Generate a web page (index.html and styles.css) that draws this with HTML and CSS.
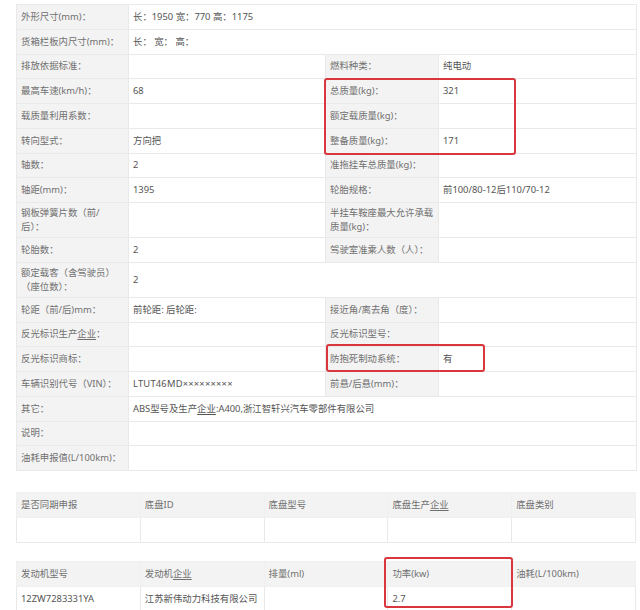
FILE: index.html
```html
<!DOCTYPE html>
<html lang="zh-CN">
<head>
<meta charset="utf-8">
<title>车辆参数</title>
<link rel="stylesheet" href="styles.css">
</head>
<body>
<div class="page">
  <table class="spec">
    <colgroup><col class="c1"><col class="c2"><col class="c3"><col class="c4"></colgroup>
    <tr><td class="lb">外形尺寸(mm)：</td><td colspan="3">长：1950 宽：770 高：1175</td></tr>
    <tr><td class="lb">货箱栏板内尺寸(mm)：</td><td colspan="3">长： 宽： 高：</td></tr>
    <tr><td class="lb">排放依据标准：</td><td></td><td class="lb">燃料种类：</td><td>纯电动</td></tr>
    <tr><td class="lb">最高车速(km/h)：</td><td>68</td><td class="lb">总质量(kg)：</td><td>321</td></tr>
    <tr><td class="lb">载质量利用系数：</td><td></td><td class="lb">额定载质量(kg)：</td><td></td></tr>
    <tr><td class="lb">转向型式：</td><td>方向把</td><td class="lb">整备质量(kg)：</td><td>171</td></tr>
    <tr><td class="lb">轴数：</td><td>2</td><td class="lb">准拖挂车总质量(kg)：</td><td></td></tr>
    <tr><td class="lb">轴距(mm)：</td><td>1395</td><td class="lb">轮胎规格：</td><td>前100/80-12后110/70-12</td></tr>
    <tr class="tall"><td class="lb">钢板弹簧片数（前/<br>后）：</td><td></td><td class="lb">半挂车鞍座最大允许承载<br>质量(kg)：</td><td></td></tr>
    <tr><td class="lb">轮胎数：</td><td>2</td><td class="lb">驾驶室准乘人数（人）：</td><td></td></tr>
    <tr class="tall"><td class="lb">额定载客（含驾驶员）<br>（座位数）：</td><td colspan="3">2</td></tr>
    <tr><td class="lb">轮距（前/后)mm：</td><td>前轮距: 后轮距:</td><td class="lb">接近角/离去角（度）：</td><td></td></tr>
    <tr><td class="lb">反光标识生产<u>企业</u>：</td><td></td><td class="lb">反光标识型号：</td><td></td></tr>
    <tr><td class="lb">反光标识商标：</td><td></td><td class="lb">防抱死制动系统：</td><td>有</td></tr>
    <tr><td class="lb">车辆识别代号（VIN）：</td><td class="vin">LTUT46MD×××××××××</td><td class="lb">前悬/后悬(mm)：</td><td></td></tr>
    <tr><td class="lb">其它：</td><td colspan="3">ABS型号及生产<u>企业</u>:A400,浙江智轩兴汽车零部件有限公司</td></tr>
    <tr><td class="lb">说明：</td><td colspan="3"></td></tr>
    <tr><td class="lb">油耗申报值(L/100km)：</td><td colspan="3"></td></tr>
  </table>

  <table class="grid grid-chassis">
    <tr class="hd"><td>是否同期申报</td><td>底盘ID</td><td>底盘型号</td><td>底盘生产<u>企业</u></td><td>底盘类别</td></tr>
    <tr><td></td><td></td><td></td><td></td><td></td></tr>
  </table>

  <table class="grid grid-engine">
    <tr class="hd"><td>发动机型号</td><td>发动机<u>企业</u></td><td>排量(ml)</td><td>功率(kw)</td><td>油耗(L/100km)</td></tr>
    <tr><td>12ZW7283331YA</td><td>江苏新伟动力科技有限公司</td><td></td><td>2.7</td><td></td></tr>
  </table>

  <div class="mark mark-mass"></div>
  <div class="mark mark-abs"></div>
  <div class="mark mark-power"></div>
</div>
</body>
</html>
```

FILE: styles.css
```css
html, body {
  margin: 0;
  padding: 0;
  background: #ffffff;
}

.page {
  position: relative;
  width: 640px;
  height: 610px;
  overflow: hidden;
  padding: 4px 0 0 16px;
  box-sizing: border-box;
  font-family: "Noto Sans", "Noto Sans CJK SC", sans-serif;
  font-size: 9.4px;
  color: #555;
}

table {
  border-collapse: collapse;
  table-layout: fixed;
  width: 620px;
}

td {
  border: 1px solid #e9e9e9;
  padding: 0 4px;
  vertical-align: middle;
  line-height: 14px;
  white-space: nowrap;
  overflow: hidden;
}

u {
  text-decoration: underline;
  text-underline-offset: 2px;
}

.spec .c1 { width: 112px; }
.spec .c2 { width: 197px; }
.spec .c3 { width: 113px; }
.spec .c4 { width: 198px; }

.spec tr { height: 24.75px; }
.spec tr.tall { height: 35px; }

.spec td.lb {
  background: #f3f3f3;
  color: #707070;
}

.vin { letter-spacing: 0.2px; }

.grid { margin-top: 21px; }
.grid-engine { margin-top: 18px; }

.grid tr { height: 25px; }

.grid tr.hd td {
  background: #f3f3f3;
  border-color: #f0f0f0;
  color: #707070;
}

.mark {
  position: absolute;
  border: 2px solid #d9373d;
  border-radius: 3px;
  box-sizing: border-box;
}

.mark-mass { left: 324px; top: 78px; width: 192px; height: 77px; }
.mark-abs { left: 326px; top: 344px; width: 159px; height: 28px; }
.mark-power { left: 384px; top: 557px; width: 129px; height: 51px; }
```
